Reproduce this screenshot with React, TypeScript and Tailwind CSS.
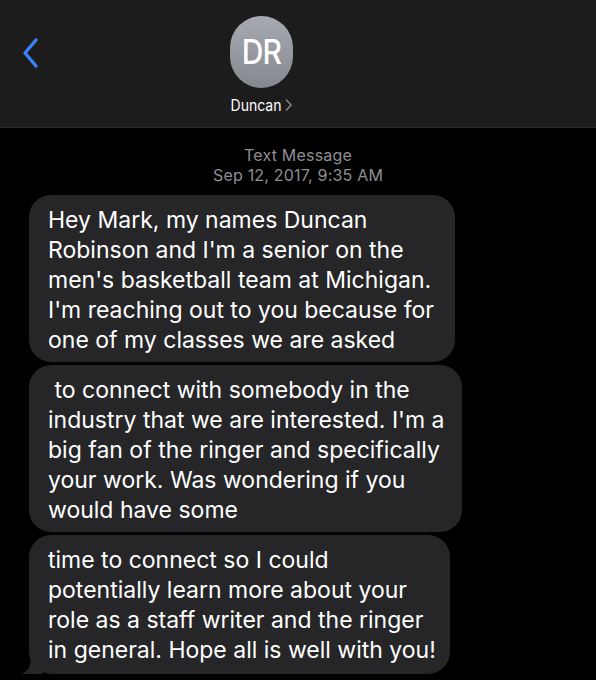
import React from "react";

const font = { fontFamily: "Inter, 'Noto Sans', sans-serif" };

export default function App() {
  const b1 = [
    "Hey Mark, my names Duncan",
    "Robinson and I'm a senior on the",
    "men's basketball team at Michigan.",
    "I'm reaching out to you because for",
    "one of my classes we are asked",
  ];
  const b2 = [
    "\u00a0to connect with somebody in the",
    "industry that we are interested. I'm a",
    "big fan of the ringer and specifically",
    "your work. Was wondering if you",
    "would have some",
  ];
  const b3 = [
    "time to connect so I could",
    "potentially learn more about your",
    "role as a staff writer and the ringer",
    "in general. Hope all is well with you!",
  ];
  return (
    <div className="w-[596px] h-[680px] bg-black overflow-hidden" style={font}>
      <div className="h-[128px] bg-[#1c1c1c] border-b border-[#2c2c2e] flex">
        <svg className="ml-[21px] mt-[37px]" width="18" height="32" viewBox="0 0 18 32">
          <path d="M15 3 L4 16 L15 29" fill="none" stroke="#3a82f7" strokeWidth="3.4" strokeLinecap="round" strokeLinejoin="round" />
        </svg>
        <div className="ml-[191px] flex flex-col items-center">
          <div className="mt-[16px] w-[63px] h-[72px] rounded-full bg-gradient-to-b from-[#a7aab1] to-[#85888f] flex items-center justify-center">
            <span className="text-white text-[30px] font-medium tracking-tight leading-none" style={{ transform: "scaleY(1.12)" }}>DR</span>
          </div>
          <div className="mt-[8px] flex items-center gap-[4px] text-[14px] text-white leading-[18px]" style={{ transform: "scaleY(1.12)" }}>
            <span>Duncan</span>
            <svg width="7" height="12" viewBox="0 0 7 12">
              <path d="M1 1 L6 6 L1 11" fill="none" stroke="#8e8e93" strokeWidth="1.3" />
            </svg>
          </div>
        </div>
      </div>
      <div className="flex flex-col items-center mt-[17px] text-[#8e8e93] text-[16px] tracking-[0.2px] leading-[20px]">
        <span>Text Message</span>
        <span>Sep 12, 2017, 9:35 AM</span>
      </div>
      <div className="flex flex-col gap-[3px] mt-[10px] ml-[29px]">
        <Bubble width="w-[426px]" pb="pb-[7px]" lines={b1} />
        <Bubble width="w-[433px]" pb="pb-[7px]" lines={b2} />
        <div className="relative">
          <Bubble width="w-[421px]" pb="pb-[9px]" lines={b3} />
          <svg className="absolute left-[-8px] bottom-[0px]" width="22" height="16" viewBox="0 0 22 16">
            <path d="M22 0 L22 16 L0 16 C6 14 9 10 10 2 Z" fill="#262628" />
          </svg>
        </div>
      </div>
    </div>
  );
}

function Bubble({ width, pb, lines }: { width: string; pb: string; lines: string[] }) {
  return (
    <div className={`${width} ${pb} rounded-[22px] bg-[#262628] pl-[19px] pt-[10px] text-white text-[23px] leading-[30px]`}>
      {lines.map((l, i) => (
        <div key={i} className="whitespace-nowrap">
          {l}
        </div>
      ))}
    </div>
  );
}
